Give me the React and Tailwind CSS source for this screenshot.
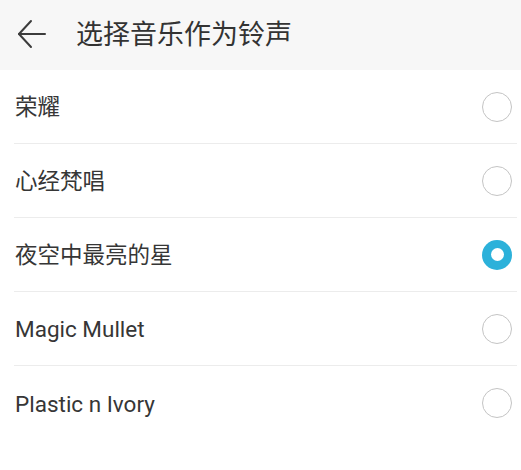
import React, { useState } from 'react';

const songs = ['荣耀', '心经梵唱', '夜空中最亮的星', 'Magic Mullet', 'Plastic n Ivory'];

const Radio = ({ checked }) => (
  checked ? (
    <div className="w-[30px] h-[30px] rounded-full bg-[#2cb1da] flex items-center justify-center">
      <div className="w-[13px] h-[13px] rounded-full bg-white" />
    </div>
  ) : (
    <div className="w-[30px] h-[30px] rounded-full border-[1.5px] border-[#c4c4c4] bg-white" />
  )
);

const App = () => {
  const [selected, setSelected] = useState(2);

  return (
    <div
      className="w-[521px] h-[470px] bg-white overflow-hidden"
      style={{ fontFamily: 'Roboto, "Noto Sans CJK SC", sans-serif' }}
    >
      <div className="h-[70px] bg-[#f7f7f7] flex items-center">
        <svg className="ml-[17px] mt-[-2px]" width="30" height="30" viewBox="0 0 30 30" fill="none" stroke="#3c3c3c" strokeWidth="2" strokeLinecap="round" strokeLinejoin="round">
          <path d="M28 15H2" />
          <path d="M14 2L2 15l12 13" />
        </svg>
        <h1 className="ml-[29px] text-[27px] text-[#333] leading-none">选择音乐作为铃声</h1>
      </div>

      <div className="ml-[14px] mr-[4px]">
        {songs.map((s, i) => (
          <div
            key={s}
            onClick={() => setSelected(i)}
            className={`h-[74px] flex items-center justify-between ${i < songs.length - 1 ? 'border-b-[1.5px] border-[#ececec]' : ''}`}
          >
            <span className="pl-[1px] pt-[3px] text-[22.5px] text-[#363636]">{s}</span>
            <div className="mr-[5px]">
              <Radio checked={selected === i} />
            </div>
          </div>
        ))}
      </div>
    </div>
  );
};

export default App;
